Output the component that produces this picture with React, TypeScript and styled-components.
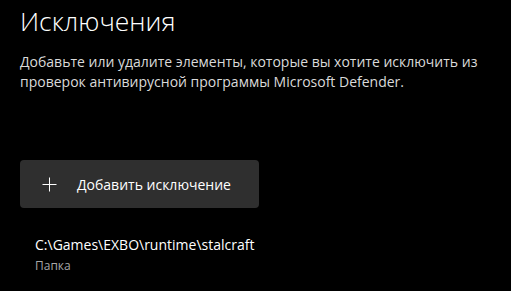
import React from "react";
import styled, { createGlobalStyle } from "styled-components";

const Global = createGlobalStyle`
  html, body { margin: 0; padding: 0; background: #000; }
  body { font-family: "Open Sans", "Noto Sans", sans-serif; color: #fff; }
`;

const Page = styled.div`
  width: 511px;
  height: 291px;
  box-sizing: border-box;
  padding: 3px 20px 0 20px;
  background: #000;
  display: flex;
  flex-direction: column;
  overflow: hidden;
`;

const Title = styled.h1`
  margin: 0;
  font-family: "Open Sans", sans-serif;
  font-weight: 300;
  font-size: 26.5px;
  line-height: 36px;
  color: #fff;
`;

const Description = styled.p`
  margin: 13px 0 0 0;
  font-family: "Open Sans", sans-serif;
  font-size: 14px;
  line-height: 20px;
  color: #dadada;
  max-width: 480px;
`;

const AddButton = styled.button`
  margin-top: 68px;
  width: 239px;
  height: 48px;
  box-sizing: border-box;
  border: none;
  border-radius: 4px;
  background: #2f2f2f;
  display: flex;
  align-items: center;
  gap: 20px;
  padding: 0 0 0 22px;
  color: #fff;
  font-family: "Open Sans", sans-serif;
  font-size: 14px;
  cursor: pointer;
`;

const PlusIcon = styled.svg`
  width: 15px;
  height: 15px;
  flex-shrink: 0;
`;

const Item = styled.div`
  margin-top: 27px;
  padding-left: 15px;
  display: flex;
  flex-direction: column;
`;

const ItemPath = styled.div`
  font-family: "Open Sans", sans-serif;
  font-size: 14px;
  line-height: 20px;
  color: #fff;
`;

const ItemType = styled.div`
  margin-top: 3px;
  font-family: "Open Sans", sans-serif;
  font-size: 12px;
  line-height: 16px;
  color: #a8a8a8;
`;

export default function App() {
  return (
    <>
      <Global />
      <Page>
        <Title>Исключения</Title>
        <Description>
          Добавьте или удалите элементы, которые вы хотите исключить из
          проверок антивирусной программы Microsoft Defender.
        </Description>
        <AddButton>
          <PlusIcon viewBox="0 0 15 15">
            <path d="M7.5 0.5 V14.5 M0.5 7.5 H14.5" stroke="#fff" strokeWidth="1" fill="none" />
          </PlusIcon>
          <span>Добавить исключение</span>
        </AddButton>
        <Item>
          <ItemPath>C:\Games\EXBO\runtime\stalcraft</ItemPath>
          <ItemType>Папка</ItemType>
        </Item>
      </Page>
    </>
  );
}
